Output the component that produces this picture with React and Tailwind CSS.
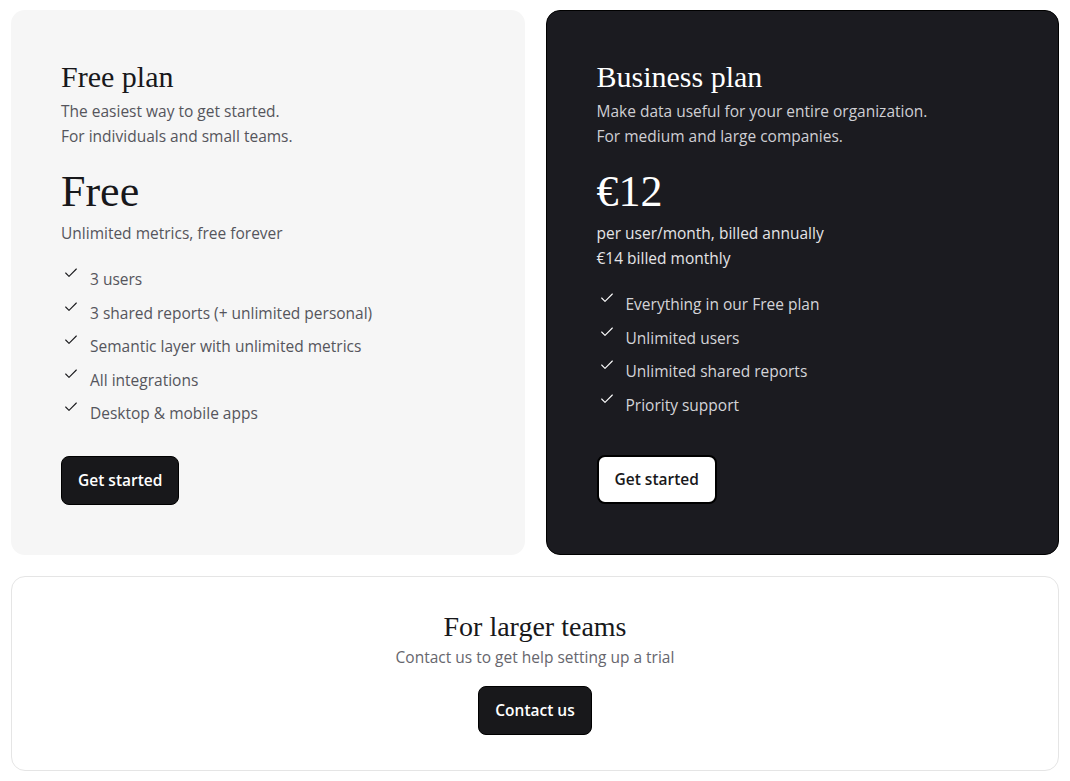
import React from 'react'
import { Check } from 'lucide-react'

const serif = { fontFamily: '"Liberation Serif", serif' }

const plans = [
  {
    name: 'Free plan',
    dark: false,
    desc: ['The easiest way to get started.', 'For individuals and small teams.'],
    price: 'Free',
    sub: ['Unlimited metrics, free forever'],
    features: [
      '3 users',
      '3 shared reports (+ unlimited personal)',
      'Semantic layer with unlimited metrics',
      'All integrations',
      'Desktop & mobile apps',
    ],
  },
  {
    name: 'Business plan',
    dark: true,
    desc: ['Make data useful for your entire organization.', 'For medium and large companies.'],
    price: '€12',
    sub: ['per user/month, billed annually', '€14 billed monthly'],
    features: [
      'Everything in our Free plan',
      'Unlimited users',
      'Unlimited shared reports',
      'Priority support',
    ],
  },
]

function PlanCard({ plan }) {
  const { dark } = plan
  return (
    <div
      className={`flex flex-col rounded-[14px] pr-[50px] pb-[50px] ${
        dark ? 'bg-[#1b1b20] border border-black text-white pt-[50px] pl-[50px]' : 'bg-[#f6f6f6] text-[#18181b] pt-[51px] pl-[50px]'
      }`}
    >
      <h2 className="text-[30px] leading-[32px]" style={serif}>{plan.name}</h2>
      <div className={`mt-[6px] text-[15.5px] leading-[25px] ${dark ? 'text-[#cfcfd4]' : 'text-[#55555c]'}`}>
        {plan.desc.map(d => <p key={d}>{d}</p>)}
      </div>
      <div className="mt-[19px] text-[44px] leading-[48px]" style={serif}>{plan.price}</div>
      <div className={`mt-[5px] text-[15.5px] leading-[25px] ${dark ? 'text-[#e4e4e7]' : 'text-[#55555c]'}`}>
        {plan.sub.map(s => <p key={s}>{s}</p>)}
      </div>
      <ul className="mt-[21px] flex flex-col gap-[8.5px]">
        {plan.features.map(f => (
          <li key={f} className={`flex items-start gap-[11px] text-[15.5px] leading-[25px] ${dark ? 'text-[#d4d4d8]' : 'text-[#55555c]'}`}>
            <Check size={16} strokeWidth={1.6} className={`mt-[-2px] ml-[2px] shrink-0 ${dark ? 'text-white' : 'text-[#18181b]'}`} />
            <span>{f}</span>
          </li>
        ))}
      </ul>
      <div className="mt-auto pt-[30px]">
        <button
          className={`h-[49px] px-[16px] rounded-[8px] text-[15.5px] font-semibold ${
            dark
              ? 'bg-white text-[#18181b] border-2 border-black'
              : 'bg-[#18181b] text-white border border-black'
          }`}
        >
          Get started
        </button>
      </div>
    </div>
  )
}

export default function App() {
  return (
    <div className="min-h-screen bg-white px-[11px] pt-[10px] pb-[11px]" style={{ fontFamily: '"Open Sans", sans-serif' }}>
      <div className="grid grid-cols-2 gap-[21px]">
        {plans.map(p => <PlanCard key={p.name} plan={p} />)}
      </div>
      <div className="mt-[21px] rounded-[14px] border border-[#e5e5e5] bg-white flex flex-col items-center pt-[35px] pb-[35px]">
        <h3 className="text-[28px] leading-[30px] text-[#18181b]" style={serif}>For larger teams</h3>
        <p className="mt-[3px] text-[15.5px] leading-[25px] text-[#66666d]">Contact us to get help setting up a trial</p>
        <button className="mt-[16px] h-[49px] px-[16px] rounded-[8px] bg-[#18181b] text-white border border-black text-[15.5px] font-semibold">
          Contact us
        </button>
      </div>
    </div>
  )
}
